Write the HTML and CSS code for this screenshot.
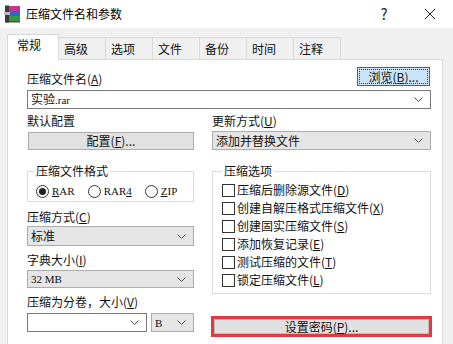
FILE: index.html
```html
<!DOCTYPE html>
<html lang="zh-CN">
<head>
    <meta charset="UTF-8">
    <title>压缩文件名和参数</title>
    <link rel="stylesheet" href="styles.css">
</head>
<body>

    <!-- Title bar -->
    <div class="titlebar">
        <svg class="app-icon" width="18" height="18" viewBox="0 0 18 18">
            <rect x="2" y="1" width="14" height="5" fill="#c5348a"/>
            <rect x="2" y="6" width="14" height="5" fill="#2e66cc"/>
            <rect x="2" y="11" width="14" height="5" fill="#2f9a44"/>
            <rect x="2" y="16" width="14" height="1.5" fill="#6b4a2a"/>
            <rect x="1" y="0.5" width="4" height="17" fill="#3b3b3b"/>
            <rect x="0" y="7" width="6" height="3" fill="#bbbbbb"/>
        </svg>
        <span class="title">压缩文件名和参数</span>
        <span class="tb-btn help">?</span>
        <span class="tb-btn close">
            <svg width="12" height="12" viewBox="0 0 12 12"><path d="M1 1 L11 11 M11 1 L1 11" stroke="#222" stroke-width="1"/></svg>
        </span>
    </div>

    <div class="dialog">
        <!-- Tabs -->
        <div class="tabs">
            <div class="tab active">常规</div>
            <div class="tab">高级</div>
            <div class="tab">选项</div>
            <div class="tab">文件</div>
            <div class="tab">备份</div>
            <div class="tab">时间</div>
            <div class="tab">注释</div>
        </div>

        <div class="panel">
            <div class="row-top">
                <span class="label">压缩文件名(<u>A</u>)</span>
                <button class="btn btn-focus">浏览(<u>B</u>)...</button>
            </div>
            <div class="combo edit">
                <span class="value">实验<span class="mono">.rar</span></span>
                <svg class="chev" width="9" height="5" viewBox="0 0 9 5"><path d="M0.5 0.5 L4.5 4.5 L8.5 0.5" fill="none" stroke="#555"/></svg>
            </div>

            <div class="cols">
                <!-- Left column -->
                <div class="col col-left">
                    <div class="label lbl-first">默认配置</div>
                    <button class="btn btn-profile">配置(<u>F</u>)...</button>

                    <fieldset class="group group-format">
                        <legend>压缩文件格式</legend>
                        <div class="radios">
                            <span class="radio checked"><i></i><u>R</u>AR</span>
                            <span class="radio"><i></i>RAR<u>4</u></span>
                            <span class="radio"><i></i><u>Z</u>IP</span>
                        </div>
                    </fieldset>

                    <div class="label lbl-method">压缩方式(<u>C</u>)</div>
                    <div class="combo drop drop-method">
                        <span class="value">标准</span>
                        <svg class="chev" width="9" height="5" viewBox="0 0 9 5"><path d="M0.5 0.5 L4.5 4.5 L8.5 0.5" fill="none" stroke="#555"/></svg>
                    </div>

                    <div class="label lbl-dict">字典大小(<u>I</u>)</div>
                    <div class="combo drop drop-dict">
                        <span class="value mono">32 MB</span>
                        <svg class="chev" width="9" height="5" viewBox="0 0 9 5"><path d="M0.5 0.5 L4.5 4.5 L8.5 0.5" fill="none" stroke="#555"/></svg>
                    </div>

                    <div class="label lbl-split">压缩为分卷，大小(<u>V</u>)</div>
                    <div class="split-row">
                        <div class="combo edit split-size">
                            <span class="value"></span>
                            <svg class="chev" width="9" height="5" viewBox="0 0 9 5"><path d="M0.5 0.5 L4.5 4.5 L8.5 0.5" fill="none" stroke="#555"/></svg>
                        </div>
                        <div class="combo drop split-unit">
                            <span class="value mono">B</span>
                            <svg class="chev" width="9" height="5" viewBox="0 0 9 5"><path d="M0.5 0.5 L4.5 4.5 L8.5 0.5" fill="none" stroke="#555"/></svg>
                        </div>
                    </div>
                </div>

                <!-- Right column -->
                <div class="col col-right">
                    <div class="label lbl-first">更新方式(<u>U</u>)</div>
                    <div class="combo drop drop-update">
                        <span class="value">添加并替换文件</span>
                        <svg class="chev" width="9" height="5" viewBox="0 0 9 5"><path d="M0.5 0.5 L4.5 4.5 L8.5 0.5" fill="none" stroke="#555"/></svg>
                    </div>

                    <fieldset class="group group-options">
                        <legend>压缩选项</legend>
                        <div class="check"><i></i>压缩后删除源文件(<u>D</u>)</div>
                        <div class="check"><i></i>创建自解压格式压缩文件(<u>X</u>)</div>
                        <div class="check"><i></i>创建固实压缩文件(<u>S</u>)</div>
                        <div class="check"><i></i>添加恢复记录(<u>E</u>)</div>
                        <div class="check"><i></i>测试压缩的文件(<u>T</u>)</div>
                        <div class="check"><i></i>锁定压缩文件(<u>L</u>)</div>
                    </fieldset>

                    <div class="highlight">
                        <button class="btn btn-password">设置密码(<u>P</u>)...</button>
                    </div>
                </div>
            </div>
        </div>
    </div>

</body>
</html>
```

FILE: styles.css
```css
body {
    margin: 0;
    background-color: #f0f0f0;
    font-family: "Noto Sans CJK SC", "Microsoft YaHei", sans-serif;
    font-size: 12px;
    line-height: 14px;
    color: #111;
    overflow: hidden;
}
u {
    text-decoration: underline;
    text-underline-offset: 1px;
}

/* Title bar */
.titlebar {
    height: 27px;
    background-color: #fff;
    display: flex;
    align-items: center;
    padding-left: 4px;
    padding-bottom: 1px;
}
.app-icon {
    margin-right: 4px;
}
.title {
    font-size: 12px;
    color: #000;
}
.tb-btn {
    display: flex;
    align-items: center;
    justify-content: center;
    width: 46px;
    font-size: 15px;
    color: #222;
}
.help {
    margin-left: auto;
}

/* Dialog body */
.dialog {
    padding: 6px 10px 0 7px;
}
.tabs {
    display: flex;
    align-items: flex-end;
    height: 25px;
}
.tab {
    box-sizing: border-box;
    width: 47px;
    height: 22px;
    padding: 4px 0 0 5px;
    border: 1px solid #d9d9d9;
    border-left: none;
    border-bottom: none;
    background-color: #f0f0f0;
    color: #111;
}
.tab.active {
    width: 52px;
    height: 26px;
    padding: 3px 0 0 9px;
    border-left: 1px solid #d9d9d9;
    background-color: #fff;
    margin-bottom: -1px;
    position: relative;
    z-index: 1;
}
.panel {
    background-color: #fff;
    border: 1px solid #d9d9d9;
    border-bottom: none;
    height: 278px;
    padding: 7px 11px 0 19px;
}

/* Labels and rows */
.label {
    height: 14px;
    white-space: nowrap;
}
.row-top {
    display: flex;
    align-items: flex-end;
    justify-content: space-between;
    height: 19px;
    padding-right: 1px;
}

/* Buttons */
.btn {
    box-sizing: border-box;
    font-family: inherit;
    font-size: 12px;
    line-height: 14px;
    color: #111;
    background-color: #e1e1e1;
    border: 1px solid #adadad;
    padding: 0;
    margin: 0;
    display: block;
}
.btn-focus {
    width: 73px;
    height: 19px;
    background-color: #cce4f7;
    border: 1px solid #0078d7;
    outline: 1px dotted #1c3f66;
    outline-offset: -3px;
}
.btn-profile {
    width: 166px;
    height: 18px;
    margin-top: 4px;
    margin-left: 1px;
}

/* Combo boxes */
.combo {
    box-sizing: border-box;
    display: flex;
    align-items: center;
    justify-content: space-between;
    padding: 0 7px 0 3px;
}
.combo.edit {
    background-color: #fff;
    border: 1px solid #7a7a7a;
    height: 19px;
    margin-top: 4px;
}
.combo.drop {
    background-color: #e5e5e5;
    border: 1px solid #acacac;
}
.mono {
    font-family: "Liberation Serif", serif;
    font-size: 11px;
}
.chev {
    flex: none;
}

.cols {
    display: flex;
    gap: 18px;
}
.col-left {
    width: 167px;
}
.col-right {
    width: 219px;
}
.lbl-first {
    margin-top: 5px;
}
.drop-update {
    height: 19px;
    margin-top: 3px;
}

/* Group boxes */
.group {
    margin: 14px 0 0 0;
    padding: 0 6px;
    border: 1px solid #dcdcdc;
    min-width: 0;
}
.group legend {
    padding: 0 2px;
    line-height: 14px;
}
.group-format {
    height: 30px;
    padding-top: 6px;
    padding-bottom: 0;
}
.radios {
    display: flex;
}
.radio {
    display: flex;
    align-items: center;
    font-family: "Liberation Serif", serif;
    font-size: 11px;
    margin-right: 11px;
    margin-left: 2px;
}
.radio i {
    box-sizing: border-box;
    width: 13px;
    height: 13px;
    border: 1px solid #333;
    border-radius: 50%;
    margin-right: 3px;
    display: flex;
    align-items: center;
    justify-content: center;
}
.radio.checked i::after {
    content: "";
    width: 7px;
    height: 7px;
    border-radius: 50%;
    background-color: #222;
}

.lbl-method {
    margin-top: 8px;
}
.drop-method {
    height: 20px;
    margin-top: 2px;
}
.lbl-dict {
    margin-top: 7px;
}
.drop-dict {
    height: 18px;
    margin-top: 3px;
}
.lbl-split {
    margin-top: 7px;
}
.split-row {
    display: flex;
    gap: 4px;
}
.split-size {
    width: 120px;
}
.split-unit {
    width: 43px;
    height: 19px;
    margin-top: 4px;
}

/* Options */
.group-options {
    padding: 3px 6px 4px 9px;
}
.check {
    display: flex;
    align-items: center;
    height: 18px;
    white-space: nowrap;
}
.check i {
    box-sizing: border-box;
    width: 13px;
    height: 13px;
    border: 1px solid #333;
    background-color: #fff;
    margin-right: 2px;
}

/* Password button with the red highlight */
.highlight {
    margin-top: 22px;
    margin-left: -1px;
    border: 3px solid #e23a3f;
    width: 221px;
    box-sizing: border-box;
}
.btn-password {
    width: 100%;
    height: 15px;
    line-height: 13px;
    border-color: #bdbdbd;
}
```
